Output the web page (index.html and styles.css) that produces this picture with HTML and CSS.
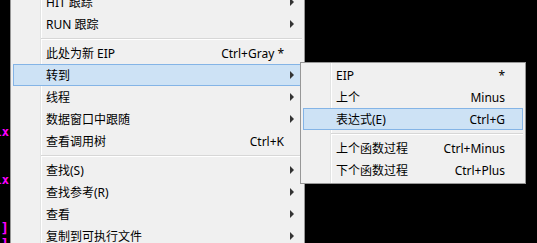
FILE: index.html
```html
<!DOCTYPE html>
<html>
<head>
<meta charset="utf-8">
<link rel="stylesheet" href="styles.css">
</head>
<body>
<div class="screen">
  <div class="code">
    <span class="frag f1">lx</span>
    <span class="frag f2">lx</span>
    <span class="frag f3">]</span>
    <span class="frag f4">]</span>
  </div>

  <div class="menu main">
    <div class="item"><span class="label">HIT 跟踪</span><span class="key"></span><span class="arrow"></span></div>
    <div class="item"><span class="label">RUN 跟踪</span><span class="key"></span><span class="arrow"></span></div>
    <div class="sep"></div>
    <div class="item"><span class="label">此处为新 EIP</span><span class="key">Ctrl+Gray *</span><span class="noarrow"></span></div>
    <div class="item hot"><span class="label">转到</span><span class="key"></span><span class="arrow"></span></div>
    <div class="item"><span class="label">线程</span><span class="key"></span><span class="arrow"></span></div>
    <div class="item"><span class="label">数据窗口中跟随</span><span class="key"></span><span class="arrow"></span></div>
    <div class="item"><span class="label">查看调用树</span><span class="key">Ctrl+K</span><span class="noarrow"></span></div>
    <div class="sep"></div>
    <div class="item"><span class="label">查找(S)</span><span class="key"></span><span class="arrow"></span></div>
    <div class="item"><span class="label">查找参考(R)</span><span class="key"></span><span class="arrow"></span></div>
    <div class="item"><span class="label">查看</span><span class="key"></span><span class="arrow"></span></div>
    <div class="item"><span class="label">复制到可执行文件</span><span class="key"></span><span class="arrow"></span></div>
  </div>

  <div class="menu sub">
    <div class="item"><span class="label">EIP</span><span class="key">*</span></div>
    <div class="item"><span class="label">上个</span><span class="key">Minus</span></div>
    <div class="item hot"><span class="label">表达式(E)</span><span class="key">Ctrl+G</span></div>
    <div class="sep"></div>
    <div class="item"><span class="label">上个函数过程</span><span class="key">Ctrl+Minus</span></div>
    <div class="item"><span class="label">下个函数过程</span><span class="key">Ctrl+Plus</span></div>
  </div>
</div>
</body>
</html>
```

FILE: styles.css
```css
html, body {
  margin: 0;
  padding: 0;
  background: #000;
}

.screen {
  position: relative;
  width: 537px;
  height: 243px;
  overflow: hidden;
  background: #000;
  font-family: "Noto Sans", "Noto Sans CJK SC", sans-serif;
  font-size: 12px;
  color: #000;
}

.code {
  font-family: "DejaVu Sans Mono", monospace;
  font-weight: bold;
  font-size: 12px;
  color: #ff00ff;
}

.frag {
  position: absolute;
  right: 528px;
  line-height: 14px;
}
.f1 { top: 125px; }
.f2 { top: 173px; }
.f3 { top: 221px; font-size: 14px; line-height: 15px; }
.f4 { top: 237px; font-size: 14px; line-height: 15px; }

.menu {
  position: absolute;
  box-sizing: border-box;
  border: 1px solid #979797;
  padding: 2px;
  background-color: #f0f0f0;
  background-image: linear-gradient(to right,
    transparent 29px, #e2e3e3 29px, #e2e3e3 30px,
    #ffffff 30px, #ffffff 31px, transparent 31px);
  background-repeat: no-repeat;
}

.main {
  left: 10px;
  top: -12px;
  width: 295px;
}

.sub {
  left: 300px;
  top: 62px;
  width: 226px;
  padding-top: 1px;
}

.item {
  box-sizing: border-box;
  height: 22px;
  display: grid;
  grid-template-columns: 1fr auto;
  align-items: center;
  padding: 0 17px 0 32px;
  border: 1px solid transparent;
  white-space: nowrap;
}

.main .item {
  grid-template-columns: 1fr auto 17px;
  padding-right: 0;
}

.item.hot {
  background: #cde2f5;
  border-color: #84b4e6;
}

.key {
  text-align: right;
}

.arrow {
  justify-self: end;
  margin-right: 7px;
  width: 0;
  height: 0;
  border-top: 4px solid transparent;
  border-bottom: 4px solid transparent;
  border-left: 4px solid #333;
}

.sep {
  height: 7px;
  margin-left: 28px;
  box-sizing: border-box;
  padding-top: 3px;
}
.sep::before {
  content: "";
  display: block;
  height: 1px;
  background: #d7d7d7;
  border-bottom: 1px solid #fff;
}
```
